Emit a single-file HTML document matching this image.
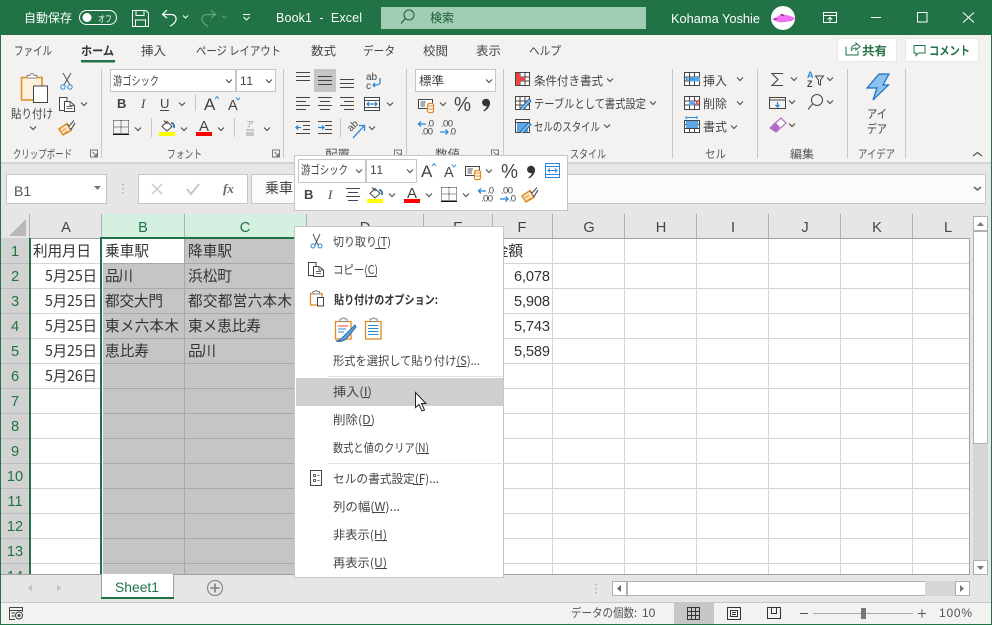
<!DOCTYPE html>
<html lang="ja"><head><meta charset="utf-8"><title>Book1 - Excel</title>
<style>
html,body{margin:0;padding:0;width:992px;height:625px;overflow:hidden;background:#f3f2f1}
svg{display:block}
text{font-family:"Liberation Sans","Noto Sans CJK JP",sans-serif;font-size:12px;fill:#444;white-space:pre}
.j{font-family:"Noto Sans CJK JP",sans-serif}
.w{fill:#fff}
.c{font-family:"Noto Sans CJK JP",sans-serif;font-size:14.6px;fill:#333}
.n{font-size:14.6px;fill:#333;font-family:"Liberation Sans",sans-serif}
.h{font-size:14.6px;fill:#444;text-anchor:middle}
.g{font-size:14.6px;fill:#217346;text-anchor:middle}
.m{font-family:"Noto Sans CJK JP",sans-serif;font-size:12px;fill:#444}
.l{font-family:"Noto Sans CJK JP",sans-serif;font-size:11.5px;fill:#555}
.s{fill:none;stroke:#444;stroke-width:1}
.cv{fill:none;stroke:#555;stroke-width:1.2}
.b{fill:none;stroke:#2b88d8;stroke-width:1.3}
</style></head><body>
<svg width="992" height="625" viewBox="0 0 992 625" xmlns="http://www.w3.org/2000/svg">
<defs>
<path id="ch" d="M-3 -1.5L0 1.5L3 -1.5" class="cv"/>
<g id="dl"><path d="M-3.500 -3.500H3.500V3.500H-3.500Z M-1.500 -1.500L2.500 2.500M2.500 0V2.500H0" fill="none" stroke="#777" stroke-width="1"/></g>
<g id="al"><path d="M0 .5H14M0 4.500H14M0 8.500H14" class="s"/></g>
<g id="brush">
<path d="M0 9L8 3.500L12 10.500L4 15Z" fill="#fbe5c8" stroke="#e08a1e" stroke-width="1.400"/>
<path d="M3 11L7 8.500M5 13.500L9 11" stroke="#e08a1e"/>
<path d="M8 4L10 6L15 .5M10.500 8L12 9.500L16 3" fill="#fff" stroke="#555" stroke-width="1.200"/>
</g>
<g id="border">
<path d="M.5 .5H15.500M.5 .5V13M15.500 .5V13M8 .5V13M.5 7H15.500" fill="none" stroke="#333" stroke-dasharray="1 1"/>
<rect x="0" y="13.500" width="16" height="1.500" fill="#111"/>
</g>
<g id="fill">
<path d="M3 6.500L8 1.500L13 6.500L8 11Z" fill="#fff" stroke="#444"/>
<path d="M5 0.500L8.500 4" stroke="#444" fill="none"/>
<path d="M12 3C14.500 3 15.500 5.500 15 8" stroke="#2b6ca8" stroke-width="1.700" fill="none"/>
<rect x="0" y="12" width="16" height="4" fill="#ffff00"/>
</g>
<g id="acct">
<rect x=".5" y=".5" width="14" height="9" fill="#fff" stroke="#444"/>
<path d="M2.500 3H8M2.500 5H7M2.500 7H7" stroke="#555" fill="none"/>
<rect x="9.500" y="4.500" width="6" height="9" rx="1.500" fill="#fff" stroke="#e08a1e" stroke-width="1.200"/>
<path d="M9.500 7H15.500M9.500 10H15.500" stroke="#e08a1e"/>
</g>
<path id="comma" d="M0 4.500a4 4 0 1 1 8 .5c0 3.500-3 7-6 8.500l-.6-1c2-1.200 3.200-3 3.500-4.500a3.800 3.800 0 0 1-4.900-3.500z" fill="#333"/>
<g id="dec">
<text x="9" y="6.500" style="font-size:9.500px" textLength="7">.0</text><text x="3" y="14.500" style="font-size:9.500px" textLength="12">.00</text>
<path d="M8 4H0M3 1.500L.5 4L3 6.500" class="b"/>
<text x="23" y="6.500" style="font-size:9.500px" textLength="12">.00</text><text x="31" y="14.500" style="font-size:9.500px" textLength="7">.0</text>
<path d="M22 12H30M27.500 9.500L30 12L27.500 14.500" class="b"/>
</g>
</defs>

<!-- window -->
<rect width="992" height="625" fill="#217346"/>
<rect x="1" y="35" width="990" height="127" fill="#f3f2f1"/>
<rect x="1" y="162" width="990" height="2" fill="#d2d2d2"/>
<rect x="1" y="164" width="990" height="410" fill="#e6e6e6"/>

<!-- title bar -->
<text x="24" y="22" class="j w" textLength="48" lengthAdjust="spacingAndGlyphs">自動保存</text>
<rect x="79.500" y="10.500" width="37" height="14" rx="7" fill="none" stroke="#fff"/>
<circle cx="87" cy="17.500" r="4.500" fill="#fff"/>
<text x="98" y="22" class="j w" style="font-size:9px" textLength="14" lengthAdjust="spacingAndGlyphs">オフ</text>
<path d="M132.500 10.500H146L148.500 13V26.500H132.500ZM136 10.500V15.500H144V10.500M135.500 26.500V20H145.500V26.500" fill="none" stroke="#fff"/>
<path d="M167 10L162.500 14.500L167 18M163 14.500H171C175 14.500 176.500 17 176 20C175.500 22 173 25 170 26" fill="none" stroke="#fff" stroke-width="1.200"/>
<path d="M183 15.500L185.500 18L188 15.500" fill="none" stroke="#fff"/>
<path d="M211 10L215.500 14.500L211 18M215 14.500H207C203 14.500 201.500 17 202 20C202.500 22 205 25 208 26" fill="none" stroke="#64a27f" stroke-width="1.200"/>
<path d="M222 15.500L224.500 18L227 15.500" fill="none" stroke="#64a27f"/>
<path d="M243 14.500H250M243.500 17L246.500 20L249.500 17" fill="none" stroke="#fff"/>
<text x="276" y="22" class="w" textLength="86" lengthAdjust="spacing" style="font-size:12.500px">Book1  -  Excel</text>
<rect x="381" y="7" width="265" height="22" fill="#9fcdb3"/>
<circle cx="409" cy="15" r="5" fill="none" stroke="#1c5e39"/><path d="M405.500 18.500L401 23.500" stroke="#1c5e39" fill="none"/>
<text x="430" y="22" class="j" style="fill:#1d5b38" textLength="24" lengthAdjust="spacingAndGlyphs">検索</text>
<text x="671" y="23" class="w" style="font-size:12.500px" textLength="89" lengthAdjust="spacingAndGlyphs">Kohama Yoshie</text>
<circle cx="783" cy="18" r="12" fill="#fff"/>
<path d="M772 19L777 17L781 14L789 15.500L795 18L792 21L781 22.500L775 21Z" fill="#f070f0"/>
<path d="M774 19H777M781 14.500L784 15.500" stroke="#551155" fill="none"/>
<path d="M823.500 12.500H836.500V22.500H823.500ZM823.500 15.500H836.500M830 22V17.500M827.800 19.500L830 17.300L832.200 19.500" fill="none" stroke="#fff"/>
<rect x="871" y="17" width="10" height="1" fill="#fff"/>
<rect x="917.500" y="12.500" width="9.500" height="9.500" fill="none" stroke="#fff"/>
<path d="M963 12.500L974 22.500M974 12.500L963 22.500" stroke="#fff" fill="none"/>

<!-- tabs -->
<text x="14" y="55" class="m" textLength="38" lengthAdjust="spacingAndGlyphs">ファイル</text>
<text x="81" y="55" class="m" style="font-weight:700;fill:#333" textLength="33" lengthAdjust="spacingAndGlyphs">ホーム</text>
<rect x="81" y="60" width="34" height="2.500" fill="#217346"/>
<text x="141" y="55" class="m" textLength="25" lengthAdjust="spacingAndGlyphs">挿入</text>
<text x="196" y="55" class="m" textLength="85" lengthAdjust="spacingAndGlyphs">ページ レイアウト</text>
<text x="311" y="55" class="m" textLength="25" lengthAdjust="spacingAndGlyphs">数式</text>
<text x="363" y="55" class="m" textLength="32" lengthAdjust="spacingAndGlyphs">データ</text>
<text x="423" y="55" class="m" textLength="25" lengthAdjust="spacingAndGlyphs">校閲</text>
<text x="476" y="55" class="m" textLength="25" lengthAdjust="spacingAndGlyphs">表示</text>
<text x="529" y="55" class="m" textLength="32" lengthAdjust="spacingAndGlyphs">ヘルプ</text>
<rect x="837.500" y="38.500" width="59" height="23" rx="1" fill="#fff" stroke="#e6e6e6"/>
<path d="M846 46.500V55H858V51M851 49C852 46 854 45 856 45V43L860 46.500L856 50V48C854 48 852 49 851 51" fill="none" stroke="#217346"/>
<text x="862" y="55" class="m" style="font-weight:700;fill:#217346" textLength="25" lengthAdjust="spacingAndGlyphs">共有</text>
<rect x="905.500" y="38.500" width="73" height="23" rx="1" fill="#fff" stroke="#e6e6e6"/>
<path d="M914 45.500H925V53H918.500L916 55.500V53H914Z" fill="none" stroke="#217346"/>
<text x="929" y="55" class="m" style="font-weight:700;fill:#217346" textLength="41" lengthAdjust="spacingAndGlyphs">コメント</text>

<!-- ribbon separators -->
<path d="M101.500 69V158M283.500 69V158M406.500 69V158M503.500 69V158M672.500 69V158M757.500 69V158M847.500 69V158M905.500 69V158" stroke="#c8c6c4" fill="none"/>

<!-- clipboard -->
<path d="M21.500 77.500H42V100H21.500Z" fill="#fdf0dc" stroke="#e08a1e" stroke-width="1.500"/>
<path d="M27 78V75.500H30C30.500 73 33.500 73 34 75.500H37V78Z" fill="#fff" stroke="#888"/>
<path d="M33.500 86H47.500V102.500H33.500Z" fill="#fff" stroke="#444"/>
<text x="11" y="118" class="m" textLength="42" lengthAdjust="spacingAndGlyphs">貼り付け</text>
<use href="#ch" x="33" y="128"/>
<path d="M63 73L70 85M71 73L64 85" stroke="#555" fill="none"/><circle cx="63" cy="87" r="2.200" fill="none" stroke="#2b88d8"/><circle cx="70" cy="87" r="2.200" fill="none" stroke="#2b88d8"/>
<path d="M59.500 97.500H67V110.500H59.500Z" fill="#fff" stroke="#444"/>
<path d="M64.500 101.500H70L74.500 105.500V111.500H64.500Z" fill="#fff" stroke="#444"/>
<path d="M70 101.500V105.500H74.500M66.500 106.500H72.500M66.500 108.500H72.500" stroke="#666" fill="none"/>
<use href="#ch" x="84" y="104"/>
<use href="#brush" x="59" y="120"/>

<text x="13" y="158" class="l" textLength="59" lengthAdjust="spacingAndGlyphs">クリップボード</text>
<use href="#dl" x="94" y="153.500"/>

<!-- font -->
<rect x="110.500" y="69.500" width="125" height="22" fill="#fff" stroke="#c6c6c6"/>
<text x="113" y="85" class="m" textLength="46" lengthAdjust="spacingAndGlyphs">游ゴシック</text>
<use href="#ch" x="229" y="81"/>
<rect x="236.500" y="69.500" width="39" height="22" fill="#fff" stroke="#c6c6c6"/>
<text x="240" y="85" style="font-size:12px" textLength="13">11</text>
<use href="#ch" x="269" y="81"/>
<text x="117" y="108" style="font-size:13px;font-weight:700">B</text>
<text x="141" y="108" style="font-size:13px;font-style:italic;font-family:'Liberation Serif',serif">I</text>
<text x="160" y="108" style="font-size:13px">U</text><rect x="160" y="110" width="9" height="1" fill="#444"/>
<use href="#ch" x="182" y="104"/>
<rect x="195" y="94" width="1" height="17" fill="#c8c6c4"/>
<text x="204" y="110" style="font-size:17px">A</text><path d="M215 99L217 96.500L219 99" fill="none" stroke="#2b88d8"/>
<text x="228" y="110" style="font-size:14.500px">A</text><path d="M236 97.500L238 100L240 97.500" fill="none" stroke="#2b88d8"/>
<use href="#border" x="113" y="120"/>
<use href="#ch" x="138" y="129"/>
<rect x="151" y="118" width="1" height="19" fill="#c8c6c4"/>
<use href="#fill" x="159" y="120"/>
<use href="#ch" x="184" y="129"/>
<text x="199" y="131" style="font-size:15px">A</text>
<rect x="196" y="132" width="16" height="4" fill="#ff0000"/>
<use href="#ch" x="221" y="129"/>
<rect x="234" y="118" width="1" height="19" fill="#c8c6c4"/>
<text x="246" y="127" class="j" style="font-size:8px;fill:#999">ア</text>
<path d="M246 130H254M246 133H254M246 135H254" stroke="#999" fill="none"/>
<use href="#ch" x="267" y="129"/>
<text x="167" y="158" class="l" textLength="35" lengthAdjust="spacingAndGlyphs">フォント</text>
<use href="#dl" x="276" y="153.500"/>

<!-- align -->
<rect x="314" y="69" width="22" height="23" fill="#c6c6c6"/>
<use href="#al" x="296" y="72"/>
<use href="#al" x="318" y="76"/>
<use href="#al" x="340" y="79"/>
<text x="366" y="80" style="font-size:10px">ab</text><text x="366" y="89" style="font-size:10px">c</text>
<path d="M380 78V82C380 84 378 85 376 85H373M375 83L373 85L375 87" class="b"/>
<path d="M296 97.500H310M296 101.500H306M296 105.500H310M296 109.500H306" class="s"/>
<path d="M318 97.500H332M320 101.500H330M318 105.500H332M320 109.500H330" class="s"/>
<path d="M340 97.500H354M344 101.500H354M340 105.500H354M344 109.500H354" class="s"/>
<path d="M364.500 97.500H379.500V110.500H364.500ZM364.500 100.500H379.500M364.500 107.500H379.500" fill="#fff" stroke="#444"/>
<path d="M367 104H377M369 102L367 104L369 106M375 102L377 104L375 106" class="b"/>
<use href="#ch" x="390" y="104"/>
<path d="M296 121.500H310M303 125.500H310M303 129.500H310M296 133.500H310" class="s"/>
<path d="M301 127.500H296M298 125.500L296 127.500L298 129.500" class="b"/>
<path d="M318 121.500H332M325 125.500H332M325 129.500H332M318 133.500H332" class="s"/>
<path d="M318 127.500H324M322 125.500L324 127.500L322 129.500" class="b"/>
<rect x="340" y="118" width="1" height="19" fill="#c8c6c4"/>
<text x="0" y="0" transform="translate(351,132) rotate(-45)" style="font-size:10px">ab</text>
<path d="M353 138L364 126M359 125.500H364.500V131" class="b"/>
<use href="#ch" x="372" y="128"/>
<text x="325" y="158" class="l" textLength="25" lengthAdjust="spacingAndGlyphs">配置</text>
<use href="#dl" x="398" y="153.500"/>

<!-- number -->
<rect x="415.500" y="69.500" width="80" height="22" fill="#fff" stroke="#c6c6c6"/>
<text x="419" y="85" class="m" textLength="25" lengthAdjust="spacingAndGlyphs">標準</text>
<use href="#ch" x="489" y="81"/>
<use href="#acct" x="418" y="99"/>
<use href="#ch" x="443" y="104"/>
<text x="454" y="111" style="font-size:20px" textLength="17" lengthAdjust="spacingAndGlyphs">%</text>
<use href="#comma" x="482" y="98"/>
<use href="#dec" x="418" y="120"/>
<text x="435" y="158" class="l" textLength="25" lengthAdjust="spacingAndGlyphs">数値</text>
<use href="#dl" x="495" y="153.500"/>

<!-- styles -->
<path d="M515.500 72.500H529.500V85.500H515.500ZM515.500 77H529.500M515.500 81H529.500M520 72.500V85.500M525 72.500V85.500" fill="#fff" stroke="#444"/>
<path d="M516 73H520V77H525V81H520V85H516Z" fill="#ee4444"/>
<text x="534" y="85" class="m" textLength="69" lengthAdjust="spacingAndGlyphs">条件付き書式</text>
<use href="#ch" x="610" y="80"/>
<path d="M515.500 96.500H529.500V109.500H515.500ZM515.500 101H529.500M515.500 105H529.500M520 96.500V109.500M525 96.500V109.500" fill="#fff" stroke="#444"/>
<path d="M520 109L529 99L531 101L523 110" fill="#8fc1ec" stroke="#2b6ca8"/>
<text x="534" y="108" class="m" textLength="112" lengthAdjust="spacingAndGlyphs">テーブルとして書式設定</text>
<use href="#ch" x="653" y="103"/>
<path d="M515.500 119.500H529.500V132.500H515.500ZM515.500 122.500H529.500" fill="#fff" stroke="#444"/>
<rect x="517" y="123" width="11" height="9" fill="#5ba6e4"/>
<path d="M520 132L529 122.500L531 124.500L523 133" fill="#8fc1ec" stroke="#2b6ca8"/>
<text x="534" y="131" class="m" textLength="66" lengthAdjust="spacingAndGlyphs">セルのスタイル</text>
<use href="#ch" x="607" y="126"/>
<text x="570" y="158" class="l" textLength="36" lengthAdjust="spacingAndGlyphs">スタイル</text>

<!-- cells -->
<path d="M684.500 72.500H699.500V85.500H684.500ZM684.500 77H699.500M684.500 81H699.500M689.500 72.500V85.500M694.500 72.500V85.500" fill="#fff" stroke="#444"/>
<rect x="690" y="77" width="10" height="4.500" fill="#5ba6e4"/>
<path d="M695 79H686M688 76.500L686 79L688 81.500" stroke="#2b88d8" fill="none"/>
<text x="703" y="85" class="m" textLength="24" lengthAdjust="spacingAndGlyphs">挿入</text>
<use href="#ch" x="740" y="79"/>
<path d="M684.500 96.500H699.500V109.500H684.500ZM684.500 101H699.500M684.500 105H699.500M689.500 96.500V109.500M694.500 96.500V109.500" fill="#fff" stroke="#444"/>
<rect x="689" y="101" width="6" height="4.500" fill="#5ba6e4"/>
<path d="M695 100L699 105M699 100L695 105" stroke="#e84040" stroke-width="1.200" fill="none"/>
<text x="703" y="108" class="m" textLength="24" lengthAdjust="spacingAndGlyphs">削除</text>
<use href="#ch" x="740" y="103"/>
<path d="M684.500 120.500H699.500V132.500H684.500ZM684.500 124.500H699.500M684.500 128.500H699.500M689.500 120.500V132.500M694.500 120.500V132.500" fill="#fff" stroke="#444"/>
<rect x="686" y="121" width="12" height="7" fill="#5ba6e4"/>
<path d="M686 117.500H697M686 116V119M697 116V119" stroke="#2b88d8" fill="none"/>
<text x="703" y="131" class="m" textLength="24" lengthAdjust="spacingAndGlyphs">書式</text>
<use href="#ch" x="734" y="127"/>
<text x="705" y="158" class="l" textLength="21" lengthAdjust="spacingAndGlyphs">セル</text>

<!-- editing -->
<path d="M783 73.500H772L778 79.500L772 85.500H783" fill="none" stroke="#444" stroke-width="1.100"/>
<use href="#ch" x="794" y="79"/>
<text x="807" y="78" style="font-size:9px;font-weight:700;fill:#2b88d8">A</text>
<text x="807" y="87" style="font-size:9px;font-weight:700">Z</text>
<path d="M815.500 76H823.500L820.500 80V85L818.500 84V80Z" fill="none" stroke="#444"/>
<use href="#ch" x="830" y="79"/>
<path d="M769.500 97.500H785.500V108.500H769.500ZM769.500 100H785.500" fill="none" stroke="#444"/>
<path d="M777.500 102V107M775.500 105L777.500 107L779.500 105" class="b"/>
<use href="#ch" x="792" y="102"/>
<circle cx="817" cy="100" r="5.500" fill="none" stroke="#444"/><path d="M812.500 104L808 109.500" stroke="#444" fill="none"/>
<use href="#ch" x="830" y="102"/>
<path d="M770 128L781 118L786 123L776 132Z" fill="#fff" stroke="#a35bb5"/><path d="M770 128L775 122L780 127L776 132Z" fill="#b469c8"/>
<use href="#ch" x="792" y="125"/>
<text x="790" y="158" class="l" textLength="24" lengthAdjust="spacingAndGlyphs">編集</text>

<!-- ideas -->
<path d="M879 74H889L883 85H888.500L873 100L877 88H867Z" fill="#8cc2f0" stroke="#1a6fc0" stroke-width="1.200"/>
<text x="867" y="118" class="m" textLength="20" lengthAdjust="spacingAndGlyphs">アイ</text>
<text x="867" y="133" class="m" textLength="20" lengthAdjust="spacingAndGlyphs">デア</text>
<text x="858" y="158" class="l" textLength="37" lengthAdjust="spacingAndGlyphs">アイデア</text>
<path d="M973 156L977.500 152.500L982 156" class="cv"/>

<!-- formula bar -->
<rect x="6.500" y="174.500" width="100" height="29" fill="#fff" stroke="#c6c6c6"/>
<text x="14" y="196" style="font-size:14px;fill:#555">B1</text>
<path d="M94 186H101L97.500 190Z" fill="#777"/>
<path d="M123 184v1.500M123 188v1.500M123 192v1.500" stroke="#b0b0b0" stroke-width="1.500"/>
<rect x="138.500" y="174.500" width="109" height="29" fill="#fff" stroke="#c6c6c6"/>
<path d="M152 184L162 194M162 184L152 194" stroke="#c8c8c8" stroke-width="1.500" fill="none"/>
<path d="M187 189L191 194L199 184" stroke="#c8c8c8" stroke-width="2" fill="none"/>
<text x="223" y="193" style="font-family:'Liberation Serif',serif;font-style:italic;font-weight:700;font-size:13px;fill:#666">fx</text>
<rect x="251.500" y="174.500" width="734" height="29" fill="#fbfbfb" stroke="#c6c6c6"/>
<text x="265" y="193" class="c" style="fill:#444;font-size:14px">乗車</text>
<path d="M974 187L977.500 190L981 187" fill="none" stroke="#666" stroke-width="1.600"/>

<!-- headers -->
<rect x="1" y="214" width="968" height="24" fill="#e6e6e6"/>
<rect x="101" y="214" width="205" height="24" fill="#d3f0e0"/>
<path d="M26 219V236H9Z" fill="#b8b8b8"/>
<path d="M29.500 214V238M101.500 214V238M184.500 214V238M306.500 214V238M423.500 214V238M492.500 214V238M552.500 214V238M624.500 214V238M696.500 214V238M768.500 214V238M840.500 214V238M912.500 214V238" stroke="#b0b0b0" fill="none"/>
<text x="66" y="232" class="h">A</text>
<text x="143" y="232" class="g">B</text>
<text x="245" y="232" class="g">C</text>
<text x="365" y="232" class="h">D</text>
<text x="458" y="232" class="h">E</text>
<text x="522" y="232" class="h">F</text>
<text x="589" y="232" class="h">G</text>
<text x="661" y="232" class="h">H</text>
<text x="733" y="232" class="h">I</text>
<text x="805" y="232" class="h">J</text>
<text x="877" y="232" class="h">K</text>
<text x="948" y="232" class="h">L</text>

<!-- row headers -->
<rect x="1" y="238" width="28" height="336" fill="#d2d2d2"/>
<text x="15" y="256" class="g">1</text><text x="15" y="281" class="g">2</text><text x="15" y="306" class="g">3</text><text x="15" y="331" class="g">4</text><text x="15" y="356" class="g">5</text><text x="15" y="381" class="g">6</text><text x="15" y="406" class="g">7</text><text x="15" y="431" class="g">8</text><text x="15" y="456" class="g">9</text><text x="15" y="481" class="g">10</text><text x="15" y="506" class="g">11</text><text x="15" y="531" class="g">12</text><text x="15" y="556" class="g">13</text><text x="15" y="581" class="g">14</text>
<path d="M1 263.500H29M1 288.500H29M1 313.500H29M1 338.500H29M1 363.500H29M1 388.500H29M1 413.500H29M1 438.500H29M1 463.500H29M1 488.500H29M1 513.500H29M1 538.500H29M1 563.500H29" stroke="#bdbdbd" fill="none"/>

<!-- grid -->
<rect x="29" y="238" width="940" height="336" fill="#fff"/>
<rect x="103" y="239" width="203" height="335" fill="#c5c5c5"/>
<rect x="103" y="239" width="81" height="24" fill="#fff"/>
<path d="M29 263.500H102M29 288.500H102M29 313.500H102M29 338.500H102M29 363.500H102M29 388.500H102M29 413.500H102M29 438.500H102M29 463.500H102M29 488.500H102M29 513.500H102M29 538.500H102M29 563.500H102" stroke="#d4d4d4" fill="none"/>
<path d="M306 263.500H969M306 288.500H969M306 313.500H969M306 338.500H969M306 363.500H969M306 388.500H969M306 413.500H969M306 438.500H969M306 463.500H969M306 488.500H969M306 513.500H969M306 538.500H969M306 563.500H969" stroke="#d4d4d4" fill="none"/>
<path d="M423.500 238V574M492.500 238V574M552.500 238V574M624.500 238V574M696.500 238V574M768.500 238V574M840.500 238V574M912.500 238V574" stroke="#d4d4d4" fill="none"/>
<path d="M103 263.500H306M103 288.500H306M103 313.500H306M103 338.500H306M103 363.500H306M103 388.500H306M103 413.500H306M103 438.500H306M103 463.500H306M103 488.500H306M103 513.500H306M103 538.500H306M103 563.500H306M184.500 238V574" stroke="#a8a8a8" fill="none"/>
<path d="M29 238.500H969M969.500 238V574" stroke="#a0a0a0" fill="none"/>
<rect x="29" y="238" width="2" height="336" fill="#217346"/>
<rect x="100" y="238" width="2" height="336" fill="#217346"/>
<rect x="100" y="237" width="206" height="2" fill="#217346"/>

<!-- cell text -->
<text x="33" y="256" class="c" textLength="58">利用月日</text>
<text x="105" y="256" class="c" textLength="44">乗車駅</text>
<text x="188" y="256" class="c" textLength="44">降車駅</text>
<text x="45" y="281" class="c" textLength="52" lengthAdjust="spacingAndGlyphs">5月25日</text>
<text x="45" y="306" class="c" textLength="52" lengthAdjust="spacingAndGlyphs">5月25日</text>
<text x="45" y="331" class="c" textLength="52" lengthAdjust="spacingAndGlyphs">5月25日</text>
<text x="45" y="356" class="c" textLength="52" lengthAdjust="spacingAndGlyphs">5月25日</text>
<text x="45" y="381" class="c" textLength="52" lengthAdjust="spacingAndGlyphs">5月26日</text>
<text x="105" y="281" class="c" textLength="28">品川</text>
<text x="105" y="306" class="c" textLength="58">都交大門</text>
<text x="105" y="331" class="c" textLength="74">東メ六本木</text>
<text x="105" y="356" class="c" textLength="44">恵比寿</text>
<text x="188" y="281" class="c" textLength="44">浜松町</text>
<text x="188" y="306" class="c" textLength="104">都交都営六本木</text>
<text x="188" y="331" class="c" textLength="73">東メ恵比寿</text>
<text x="188" y="356" class="c" textLength="28">品川</text>
<text x="494" y="256" class="c" textLength="29">金額</text>
<text x="514" y="281" class="n" textLength="36">6,078</text>
<text x="514" y="306" class="n" textLength="36">5,908</text>
<text x="514" y="331" class="n" textLength="36">5,743</text>
<text x="514" y="356" class="n" textLength="36">5,589</text>

<!-- vertical scrollbar -->
<rect x="973.500" y="216.500" width="14" height="14" fill="#fff" stroke="#b0b0b0"/>
<path d="M977 226H984L980.500 222Z" fill="#777"/>
<rect x="973.500" y="231.500" width="14" height="212" fill="#fff" stroke="#b0b0b0"/>
<rect x="973" y="444" width="15" height="116" fill="#d6d6d6"/>

<!-- bottom tab bar -->
<rect x="1" y="574" width="990" height="28" fill="#e6e6e6"/>
<rect x="973.500" y="560.500" width="14" height="14" fill="#fff" stroke="#b0b0b0"/>
<path d="M977 566H984L980.500 570Z" fill="#777"/>
<rect x="1" y="574" width="969" height="1" fill="#a0a0a0"/>
<path d="M32 584.500V591.500L28 588Z" fill="#c0c0c0"/>
<path d="M57 584.500V591.500L61 588Z" fill="#c0c0c0"/>
<rect x="102" y="574" width="71" height="23" fill="#fff"/>
<path d="M101.500 574V598M173.500 574V598" stroke="#a0a0a0" fill="none"/>
<rect x="101" y="597" width="73" height="2" fill="#217346"/>
<text x="115" y="592" style="font-size:14px;fill:#217346" textLength="44" lengthAdjust="spacingAndGlyphs">Sheet1</text>
<circle cx="215" cy="588" r="7.500" fill="none" stroke="#8a8a8a" stroke-width="1.200"/>
<path d="M210.500 588H219.500M215 583.500V592.500" stroke="#8a8a8a" stroke-width="1.800"/>
<path d="M596 584v1.500M596 588v1.500M596 592v1.500" stroke="#b0b0b0" stroke-width="1.500"/>
<rect x="612.500" y="581.500" width="14" height="14" fill="#fff" stroke="#b0b0b0"/>
<path d="M621 585V592L617 588.500Z" fill="#666"/>
<rect x="627.500" y="581.500" width="337" height="14" fill="#fff" stroke="#b0b0b0"/>
<rect x="925" y="581" width="30" height="15" fill="#d6d6d6"/>
<rect x="955.500" y="581.500" width="14" height="14" fill="#fff" stroke="#b0b0b0"/>
<path d="M960 585V592L964 588.500Z" fill="#777"/>

<!-- status bar -->
<rect x="1" y="602" width="990" height="22" fill="#f3f2f1"/>
<rect x="1" y="602" width="990" height="1" fill="#c8c8c8"/>
<path d="M9.500 607.500H22.500V612M9.500 607.500V619.500H15M9.500 610.500H22.500M11.500 613H15M11.500 616H15" fill="none" stroke="#444"/>
<circle cx="19" cy="615.500" r="3.500" fill="none" stroke="#444"/><circle cx="19" cy="615.500" r="1.500" fill="#444"/>
<text x="571" y="617" class="m" style="font-size:12px;fill:#555" textLength="66" lengthAdjust="spacingAndGlyphs">データの個数:</text>
<text x="642" y="617" style="font-size:12px;fill:#555">10</text>
<rect x="674" y="603" width="40" height="21" fill="#c6c6c6"/>
<path d="M687.500 607.500H699.500V619.500H687.500ZM687.500 611.500H699.500M687.500 615.500H699.500M691.500 607.500V619.500M695.500 607.500V619.500" fill="none" stroke="#333"/>
<path d="M727.500 607.500H740.500V619.500H727.500ZM730.500 610.500H737.500V616.500H730.500ZM732 612.500H736M732 614.500H736" fill="none" stroke="#333"/>
<path d="M767.500 607.500H780.500V618.500H767.500ZM771.500 607.500V613.500H776.500V607.500" fill="none" stroke="#333"/>
<rect x="800" y="613" width="8" height="1" fill="#555"/>
<rect x="813" y="613" width="100" height="1" fill="#aaa"/>
<rect x="861" y="608" width="5" height="11" fill="#777"/>
<path d="M918 613.500H926M922 609.500V617.500" stroke="#555" fill="none"/>
<text x="939" y="617" style="font-size:12px;fill:#555" textLength="33">100%</text>

<!-- mini toolbar -->
<rect x="294.500" y="155.500" width="273" height="55" fill="#fff" stroke="#c6c6c6"/>
<rect x="298.500" y="159.500" width="67" height="23" fill="#fff" stroke="#c6c6c6"/>
<text x="301" y="174" class="m" textLength="47" lengthAdjust="spacingAndGlyphs">游ゴシック</text>
<use href="#ch" x="359" y="171"/>
<rect x="366.500" y="159.500" width="50" height="23" fill="#fff" stroke="#c6c6c6"/>
<text x="370" y="174" textLength="13">11</text>
<use href="#ch" x="410" y="171"/>
<text x="421" y="177" style="font-size:17px">A</text><path d="M432 166L434 163.500L436 166" fill="none" stroke="#2b88d8"/>
<text x="444" y="177" style="font-size:14.500px">A</text><path d="M452 164.500L454 167L456 164.500" fill="none" stroke="#2b88d8"/>
<use href="#acct" x="465" y="166"/>
<use href="#ch" x="489" y="171"/>
<text x="501" y="178" style="font-size:20px" textLength="17" lengthAdjust="spacingAndGlyphs">%</text>
<use href="#comma" x="527" y="165"/>
<rect x="545.500" y="163.500" width="14" height="14" fill="#fff" stroke="#2b88d8"/>
<path d="M545.500 166.500H559.500M545.500 174.500H559.500" stroke="#2b88d8"/>
<path d="M548 170.500H557M550 168.500L548 170.500L550 172.500M555 168.500L557 170.500L555 172.500" stroke="#2b88d8" fill="none"/>
<text x="304" y="199" style="font-size:13px;font-weight:700">B</text>
<text x="328" y="199" style="font-size:13px;font-style:italic;font-family:'Liberation Serif',serif">I</text>
<path d="M346 188.500H360M348 192.500H358M346 196.500H360M348 200.500H358" class="s"/>
<use href="#fill" x="367" y="187"/>
<use href="#ch" x="392" y="195"/>
<text x="407" y="198" style="font-size:15px">A</text>
<rect x="404" y="199" width="16" height="4" fill="#ff0000"/>
<use href="#ch" x="429" y="195"/>
<use href="#border" x="441" y="187"/>
<use href="#ch" x="466" y="195"/>
<use href="#dec" x="478" y="187"/>
<use href="#brush" x="522" y="187"/>

<!-- context menu -->
<rect x="294.500" y="226.500" width="209" height="351" fill="#fff" stroke="#c6c6c6"/>
<rect x="296" y="378" width="207" height="28" fill="#d0cfcd"/>
<path d="M328 376.500H502M328 463.500H502" stroke="#e1e1e1" fill="none"/>
<path d="M313 234L318 245M320 234L315 245" stroke="#555" fill="none"/><circle cx="313" cy="246" r="2" fill="none" stroke="#2b88d8"/><circle cx="320" cy="246" r="2" fill="none" stroke="#2b88d8"/>
<text x="333" y="246" class="m" textLength="58" lengthAdjust="spacingAndGlyphs">切り取り(T)</text>
<path d="M308.500 262.500H316V275.500H308.500Z" fill="#fff" stroke="#444"/>
<path d="M313.500 266.500H319L323.500 270V276.500H313.500Z" fill="#fff" stroke="#444"/>
<path d="M319 266.500V270H323.500M316 271.500H321M316 273.500H321" stroke="#666" fill="none"/>
<text x="333" y="274" class="m" textLength="45" lengthAdjust="spacingAndGlyphs">コピー(C)</text>
<path d="M310.500 293.500H322V305H310.500Z" fill="#fff" stroke="#e08a1e" stroke-width="1.300"/>
<path d="M313 294V291.500H315C315.500 290 317 290 317.500 291.500H319.500V294Z" fill="#fff" stroke="#888"/>
<rect x="317.500" y="297.500" width="6" height="8.500" fill="#fff" stroke="#444"/>
<text x="334" y="304" class="m" style="font-weight:700;fill:#333" textLength="104" lengthAdjust="spacingAndGlyphs">貼り付けのオプション:</text>
<path d="M335.500 321.500H351V339H335.500Z" fill="#fff" stroke="#e08a1e" stroke-width="1.300"/>
<path d="M340 321.500V319H342C342.500 317.500 344.500 317.500 345 319H347V321.500Z" fill="#fff" stroke="#888"/>
<path d="M338 326H348" stroke="#e84040"/><path d="M338 329H346M338 332H344" stroke="#2b88d8"/>
<path d="M336 341C340 341 342 338 345 335L355 325L356 327L347 338C344 341 340 342 336 341Z" fill="#5ba6e4" stroke="#2b6ca8"/>
<path d="M365.500 321.500H381V339H365.500Z" fill="#fff" stroke="#e08a1e" stroke-width="1.300"/>
<path d="M370 321.500V319H372C372.500 317.500 374.500 317.500 375 319H377V321.500Z" fill="#fff" stroke="#888"/>
<path d="M368 325.500H378.500M368 328.500H378.500M368 331.500H378.500M368 334.500H378.500" stroke="#2b88d8"/>
<text x="333" y="365" class="m" textLength="147" lengthAdjust="spacingAndGlyphs">形式を選択して貼り付け(S)...</text>
<text x="333" y="396" class="m" textLength="39" lengthAdjust="spacingAndGlyphs">挿入(I)</text>
<text x="333" y="424" class="m" textLength="42" lengthAdjust="spacingAndGlyphs">削除(D)</text>
<text x="333" y="452" class="m" textLength="96" lengthAdjust="spacingAndGlyphs">数式と値のクリア(N)</text>
<path d="M310.500 470.500H321.500V485.500H310.500Z" fill="none" stroke="#444"/>
<path d="M313.500 474.500h2v2h-2zM313.500 479.500h2v2h-2zM317.500 475.500h2M317.500 480.500h2" fill="none" stroke="#666"/>
<text x="333" y="483" class="m" textLength="106" lengthAdjust="spacingAndGlyphs">セルの書式設定(F)...</text>
<text x="333" y="511" class="m" textLength="67" lengthAdjust="spacingAndGlyphs">列の幅(W)...</text>
<text x="333" y="539" class="m" textLength="54" lengthAdjust="spacingAndGlyphs">非表示(H)</text>
<text x="333" y="567" class="m" textLength="54" lengthAdjust="spacingAndGlyphs">再表示(U)</text>
<!-- mnemonic underlines -->
<path d="M375 248.500H386M366 276.500H377M456 366.500H466M363 397.500H369M363 425.500H372M417 453.500H429M413 484.500H423M372 512.500H385M375 540.500H387M375 568.500H387" stroke="#444" fill="none"/>
<!-- cursor -->
<path d="M415.500 392.500V407.500L419 404.500L422 411L424.500 410L421.500 403.500H426Z" fill="#fff" stroke="#222"/>

<!-- window frame -->
<rect x="0" y="35" width="1" height="590" fill="#217346"/>
<rect x="991" y="35" width="1" height="590" fill="#217346"/>
<rect x="0" y="624" width="992" height="1" fill="#217346"/>
</svg>
</body></html>
